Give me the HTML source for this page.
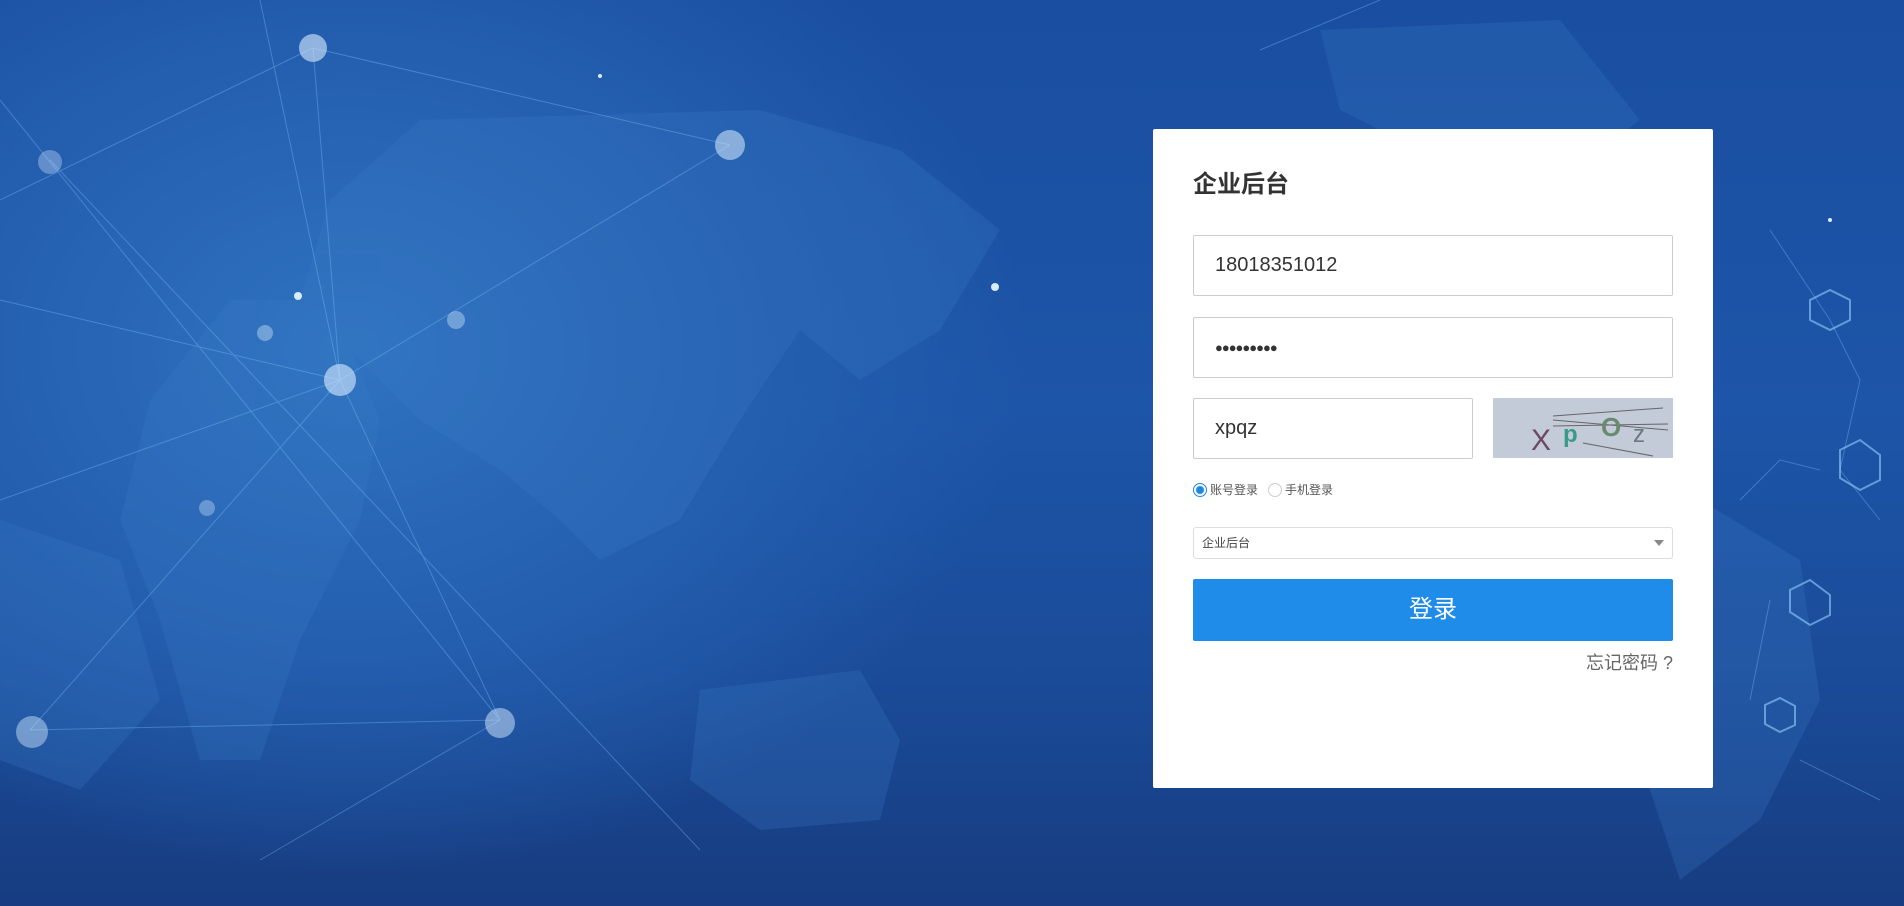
<!DOCTYPE html>
<html><head><meta charset="utf-8"><style>
*{margin:0;padding:0;box-sizing:border-box}
html,body{width:1904px;height:906px;overflow:hidden}
body{position:relative;font-family:"Liberation Sans","Noto Sans CJK SC",sans-serif;
background:radial-gradient(ellipse 900px 700px at 350px 350px,#2f73c0 0%,#2560b0 40%,rgba(30,80,160,0) 75%),
linear-gradient(180deg,#1a4ea0 0%,#1d55a8 45%,#1a4b98 75%,#173c80 100%);}
svg.bg{position:absolute;left:0;top:0}
.card{position:absolute;left:1153px;top:129px;width:560px;height:659px;background:#fff;border-radius:2px}
.title{position:absolute;left:40px;top:35px;font-size:24px;font-weight:bold;color:#333}
.inp{position:absolute;left:40px;width:480px;height:61px;border:1px solid #ccc;border-radius:2px;font-size:20px;color:#333;padding-left:21px;line-height:59px}
.dots{font-size:13px;letter-spacing:-1px}
.cap{position:absolute;left:340px;top:269px;width:180px;height:60px;background:#c3cad8;overflow:hidden}
.radio{position:absolute;left:40px;top:352px;font-size:12px;color:#555;display:flex;align-items:center}
.r{width:14px;height:14px;border-radius:50%;border:1px solid #ccc;display:inline-block;margin-right:3px}
.r.on{border-color:#1e88e5;background:radial-gradient(circle,#1e88e5 3.5px,#fff 4.5px)}
.sel{position:absolute;left:40px;top:398px;width:480px;height:32px;border:1px solid #ddd;border-radius:3px;font-size:12px;color:#444;padding-left:8px;line-height:30px}
.sel:after{content:"";position:absolute;right:8px;top:12px;border:5px solid transparent;border-top:6px solid #888}
.btn{position:absolute;left:40px;top:450px;width:480px;height:62px;background:#1f8ce9;border-radius:2px;color:#fff;font-size:24px;text-align:center;line-height:62px}
.fg{position:absolute;right:40px;top:520px;font-size:18px;color:#666}
</style></head><body>
<svg class="bg" width="1904" height="906" viewBox="0 0 1904 906">
<g fill="#3a7cc6" opacity="0.25">
<path d="M420 120 L760 110 L900 150 L1000 230 L940 330 L860 380 L800 330 L740 420 L680 520 L600 560 L560 520 L500 470 L420 420 L360 360 L300 300 L330 200Z"/>
<path d="M230 300 L330 300 L380 420 L360 520 L300 640 L260 760 L200 760 L160 620 L120 520 L150 400Z"/>
<path d="M700 690 L860 670 L900 740 L880 820 L760 830 L690 780Z"/>
<path d="M1320 30 L1560 20 L1640 120 L1560 180 L1440 160 L1340 110Z"/>
<path d="M0 520 L120 560 L160 700 L80 790 L0 760Z"/>
<path d="M1700 500 L1800 560 L1820 700 L1760 820 L1680 880 L1640 760 L1660 600Z"/>
</g>
<g stroke="#7fc6ff" stroke-width="1" opacity="0.35">
<line x1="313" y1="48" x2="340" y2="380"/><line x1="313" y1="48" x2="0" y2="200"/><line x1="313" y1="48" x2="730" y2="145"/>
<line x1="340" y1="380" x2="0" y2="300"/><line x1="340" y1="380" x2="730" y2="145"/><line x1="340" y1="380" x2="500" y2="720"/>
<line x1="340" y1="380" x2="30" y2="730"/><line x1="340" y1="380" x2="0" y2="500"/><line x1="340" y1="380" x2="260" y2="0"/>
<line x1="500" y1="720" x2="30" y2="730"/><line x1="500" y1="720" x2="260" y2="860"/><line x1="0" y1="100" x2="500" y2="720"/>
<line x1="50" y1="160" x2="700" y2="850"/><line x1="1260" y1="50" x2="1380" y2="0"/>
<path d="M1770 230 L1830 320 L1860 380 L1840 470 L1880 520 M1740 500 L1780 460 L1820 470 M1770 600 L1750 700 M1800 760 L1880 800" fill="none"/>
</g>
<g fill="none" stroke="#8fd0ff" stroke-width="2" opacity="0.6">
<polygon points="1810,300 1830,290 1850,300 1850,320 1830,330 1810,320"/>
<polygon points="1840,450 1860,440 1880,455 1880,480 1860,490 1840,478"/>
<polygon points="1790,590 1810,580 1830,595 1830,615 1810,625 1790,612"/>
<polygon points="1765,705 1780,698 1795,706 1795,725 1780,732 1765,724"/>
</g>
<g fill="#d8ecff">
<circle cx="313" cy="48" r="14" opacity="0.6"/><circle cx="340" cy="380" r="16" opacity="0.6"/><circle cx="730" cy="145" r="15" opacity="0.55"/>
<circle cx="500" cy="723" r="15" opacity="0.5"/><circle cx="32" cy="732" r="16" opacity="0.45"/><circle cx="298" cy="296" r="4"/>
<circle cx="995" cy="287" r="4"/><circle cx="50" cy="162" r="12" opacity="0.35"/><circle cx="456" cy="320" r="9" opacity="0.4"/>
<circle cx="265" cy="333" r="8" opacity="0.4"/><circle cx="207" cy="508" r="8" opacity="0.35"/><circle cx="600" cy="76" r="2"/><circle cx="1830" cy="220" r="2"/>
</g>
</svg>
<div class="card">
<div class="title">企业后台</div>
<div class="inp" style="top:106px">18018351012</div>
<div class="inp dots" style="top:188px">●●●●●●●●●</div>
<div class="inp" style="top:269px;width:280px">xpqz</div>
<div class="cap"><svg width="180" height="60">
<g stroke="#666" stroke-width="1"><line x1="60" y1="18" x2="170" y2="10"/><line x1="60" y1="22" x2="175" y2="32"/><line x1="90" y1="45" x2="160" y2="58"/><line x1="60" y1="28" x2="175" y2="26"/></g>
<text x="38" y="52" font-size="30" fill="#6b4a66" font-family="Liberation Sans">X</text>
<text x="70" y="44" font-size="24" fill="#3a9a8a" font-family="Liberation Sans" font-weight="bold">p</text>
<text x="108" y="38" font-size="26" fill="#6a8a70" font-family="Liberation Sans" font-weight="bold">O</text>
<text x="140" y="44" font-size="24" fill="#6a7a80" font-family="Liberation Sans">z</text>
</svg></div>
<div class="radio"><span class="r on"></span>账号登录&nbsp;&nbsp;&nbsp;<span class="r"></span>手机登录</div>
<div class="sel">企业后台</div>
<div class="btn">登录</div>
<div class="fg">忘记密码 ?</div>
</div>
</body></html>
